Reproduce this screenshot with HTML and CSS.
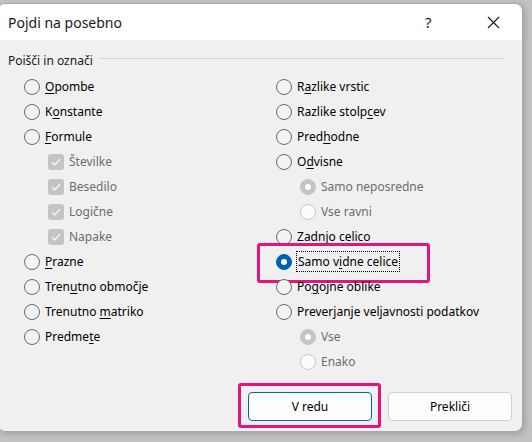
FILE: index.html
```html
<!DOCTYPE html>
<html lang="sl">
<head>
<meta charset="utf-8">
<title>Pojdi na posebno</title>
<link rel="stylesheet" href="styles.css">
</head>
<body>
<div class="dialog">
  <div class="titlebar">
    <span class="title">Pojdi na posebno</span>
    <span class="help">?</span>
    <span class="close"><svg width="13" height="13" viewBox="0 0 13 13"><path d="M1 1 L12 12 M12 1 L1 12" stroke="#1a1a1a" stroke-width="1.1" fill="none"/></svg></span>
  </div>
  <div class="body">
    <div class="group-head"><span class="group-label">Poišči in označi</span><span class="group-line"></span></div>
    <div class="cols">
      <div class="col">
        <div class="row"><span class="radio"></span><span class="lbl"><u>O</u>pombe</span></div>
        <div class="row"><span class="radio"></span><span class="lbl">K<u>o</u>nstante</span></div>
        <div class="row"><span class="radio"></span><span class="lbl"><u>F</u>ormule</span></div>
        <div class="row sub dis"><span class="check"><svg width="10" height="8" viewBox="0 0 10 8"><path d="M1 4.2 L3.8 7 L9 1.2" stroke="#fff" stroke-width="1.2" fill="none"/></svg></span><span class="lbl">Številke</span></div>
        <div class="row sub dis"><span class="check"><svg width="10" height="8" viewBox="0 0 10 8"><path d="M1 4.2 L3.8 7 L9 1.2" stroke="#fff" stroke-width="1.2" fill="none"/></svg></span><span class="lbl">Besedilo</span></div>
        <div class="row sub dis"><span class="check"><svg width="10" height="8" viewBox="0 0 10 8"><path d="M1 4.2 L3.8 7 L9 1.2" stroke="#fff" stroke-width="1.2" fill="none"/></svg></span><span class="lbl">Logične</span></div>
        <div class="row sub dis"><span class="check"><svg width="10" height="8" viewBox="0 0 10 8"><path d="M1 4.2 L3.8 7 L9 1.2" stroke="#fff" stroke-width="1.2" fill="none"/></svg></span><span class="lbl">Napake</span></div>
        <div class="row"><span class="radio"></span><span class="lbl"><u>P</u>razne</span></div>
        <div class="row"><span class="radio"></span><span class="lbl">Tren<u>u</u>tno območje</span></div>
        <div class="row"><span class="radio"></span><span class="lbl">Trenutno <u>m</u>atriko</span></div>
        <div class="row"><span class="radio"></span><span class="lbl">Predme<u>t</u>e</span></div>
      </div>
      <div class="col">
        <div class="row"><span class="radio"></span><span class="lbl">R<u>a</u>zlike vrstic</span></div>
        <div class="row"><span class="radio"></span><span class="lbl">Razlike stolp<u>c</u>ev</span></div>
        <div class="row"><span class="radio"></span><span class="lbl">Pred<u>h</u>odne</span></div>
        <div class="row"><span class="radio"></span><span class="lbl">O<u>d</u>visne</span></div>
        <div class="row sub dis"><span class="radio on"></span><span class="lbl">Samo neposredne</span></div>
        <div class="row sub dis"><span class="radio"></span><span class="lbl">Vse ravni</span></div>
        <div class="row"><span class="radio"></span><span class="lbl"><u>Z</u>adnjo celico</span></div>
        <div class="row hl"><span class="radio on sel"></span><span class="lbl focus">Samo v<u>i</u>dne celice</span><span class="mark mark-row"></span></div>
        <div class="row"><span class="radio"></span><span class="lbl">Po<u>g</u>ojne oblike</span></div>
        <div class="row"><span class="radio"></span><span class="lbl">Preverjanje veljavnosti podatkov</span></div>
        <div class="row sub dis"><span class="radio on"></span><span class="lbl">Vse</span></div>
        <div class="row sub dis"><span class="radio"></span><span class="lbl">Enako</span></div>
      </div>
    </div>
    <div class="buttons">
      <div class="btn-wrap"><button class="btn primary">V redu</button><span class="mark mark-btn"></span></div>
      <button class="btn">Prekliči</button>
    </div>
  </div>
</div>
</body>
</html>
```
FILE: styles.css
```css
* { box-sizing: border-box; }
html, body { margin: 0; padding: 0; }
body {
  background: #c2c2c2;
  font-family: "Noto Sans", "Open Sans", sans-serif;
  width: 532px;
  height: 442px;
  overflow: hidden;
  padding-top: 3px;
}
.dialog {
  margin-left: -3px;
  width: 526px;
  height: 429px;
  background: #f0f0f0;
  border: 1px solid #a8a8a8;
  border-radius: 8px;
  overflow: hidden;
  box-shadow: 2px 2px 6px rgba(0,0,0,0.18);
  display: flex;
  flex-direction: column;
}
.titlebar {
  height: 36px;
  background: #fff;
  display: flex;
  align-items: center;
  padding-left: 10px;
  flex: none;
}
.title {
  font-size: 14px;
  color: #1a1a1a;
  flex: 1;
  padding-top: 1px;
}
.help {
  font-size: 15px;
  color: #1a1a1a;
  width: 62px;
}
.close {
  width: 35px;
  display: flex;
  align-items: center;
}
.body {
  flex: 1;
  display: flex;
  flex-direction: column;
  padding-top: 10px;
}
.group-head {
  display: flex;
  align-items: center;
  height: 20px;
  padding-left: 10px;
  padding-right: 18px;
  font-size: 12px;
  color: #1a1a1a;
}
.group-line {
  flex: 1;
  height: 1px;
  background: #d6d6d6;
  margin-left: 6px;
  margin-top: -4px;
}
.cols {
  display: grid;
  grid-template-columns: 252px 1fr;
  padding-left: 26px;
  margin-top: 4px;
}
.row {
  height: 25px;
  display: flex;
  align-items: center;
  font-size: 12px;
  color: #000;
  position: relative;
}
.row.sub { padding-left: 24px; }
.row.dis { color: #6d6d6d; }
.lbl { white-space: nowrap; }
.lbl u { text-decoration-thickness: 1px; text-underline-offset: 2px; }
.radio {
  width: 16px;
  height: 16px;
  border-radius: 50%;
  border: 1px solid #6a6a6a;
  background: #f3f3f3;
  margin-right: 5px;
  flex: none;
  display: flex;
  align-items: center;
  justify-content: center;
}
.dis .radio { border-color: #c8c8c8; background: #fbfbfb; }
.radio.on { background: #c4c4c4; border-color: #c4c4c4; }
.radio.on::after {
  content: "";
  width: 6px;
  height: 6px;
  border-radius: 50%;
  background: #fff;
}
.radio.sel { background: #005fb8; border-color: #005fb8; }
.check {
  width: 16px;
  height: 16px;
  border-radius: 3px;
  background: #c4c4c4;
  margin-right: 5px;
  flex: none;
  display: flex;
  align-items: center;
  justify-content: center;
}
.focus {
  outline: 1px dotted #000;
  padding: 0 1px;
  line-height: 19px;
}
.mark {
  position: absolute;
  border: 3px solid #e3157a;
  border-radius: 3px;
  pointer-events: none;
}
.mark-row { left: -19px; top: -6px; width: 173px; height: 40px; }
.buttons {
  display: flex;
  justify-content: flex-end;
  gap: 16px;
  padding-right: 10px;
  margin-top: auto;
  margin-bottom: 10px;
}
.btn-wrap { position: relative; display: flex; }
.mark-btn { left: -10px; top: -9px; width: 143px; height: 45px; }
.btn {
  width: 124px;
  height: 29px;
  font-family: inherit;
  font-size: 12px;
  color: #000;
  background: #fdfdfd;
  border: 1px solid #d2d2d2;
  border-radius: 4px;
  padding: 0;
}
.btn.primary { border-color: #0067c0; background: #fdfdfd; }
```
